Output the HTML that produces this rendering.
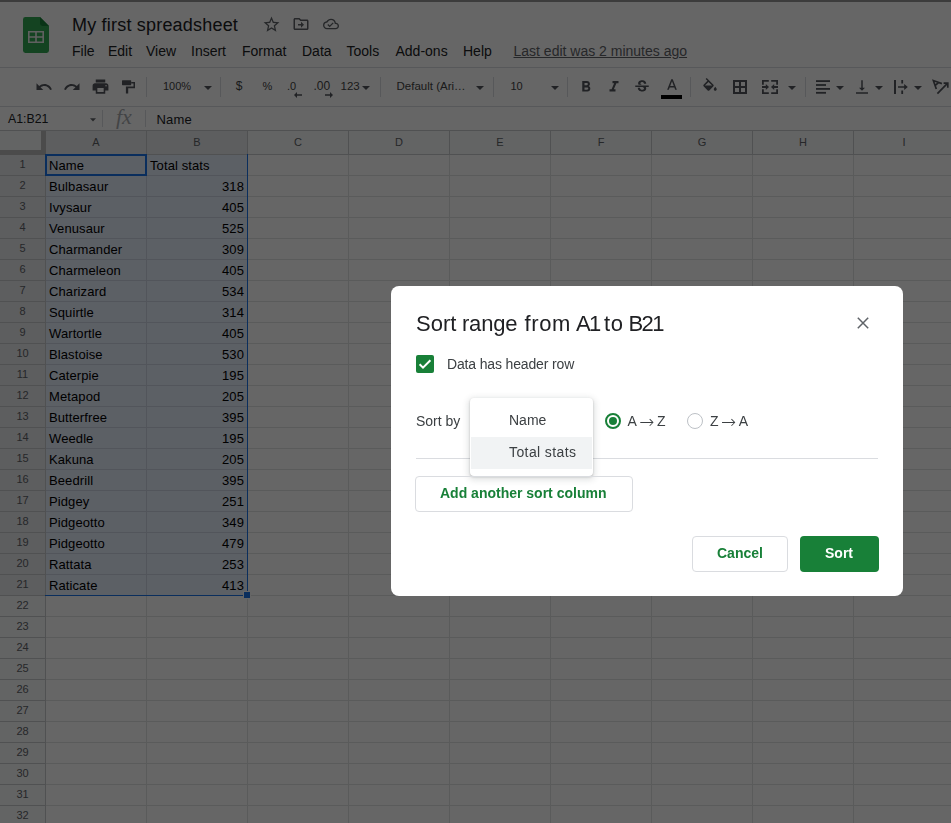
<!DOCTYPE html><html><head><meta charset="utf-8"><title>My first spreadsheet</title><style>
*{box-sizing:border-box;margin:0;padding:0}
html,body{width:951px;height:823px;overflow:hidden;background:#fff;font-family:"Liberation Sans",sans-serif;}
#app{position:absolute;left:0;top:0;width:951px;height:823px;overflow:hidden;background:#fff}
.abs{position:absolute}
#topline{left:0;top:0;width:951px;height:2px;background:#969696}
#title{left:72px;top:14px;letter-spacing:0.2px;font-size:18px;line-height:22px;color:#202124;white-space:nowrap}
.menu{top:42px;font-size:14px;line-height:18px;color:#202124;white-space:nowrap}
#lastedit{left:513.5px;top:42px;font-size:14px;line-height:18px;color:#5f6368;text-decoration:underline;white-space:nowrap}
#tbborder{left:0;top:67px;width:951px;height:1px;background:#dadce0}
#toolbar{left:0;top:68px;width:951px;height:38px;background:#fff}
.tbtxt{font-size:11px;line-height:14px;color:#444;white-space:nowrap}
.sep{width:1px;height:20px;top:77px;background:#dadce0}
#fbar-top{left:0;top:106px;width:951px;height:1px;background:#dadce0}
#fbar-bot{left:0;top:130px;width:951px;height:1px;background:#c9cbce}
#namebox{left:8px;top:112px;font-size:12.3px;line-height:15px;color:#202124}
#fval{left:156.5px;top:112px;letter-spacing:0.2px;font-size:13px;line-height:15px;color:#202124}
#colhdr{left:0;top:131px;width:951px;height:23px;background:#f8f9fa}
.ch{top:131px;height:23px;font-size:11px;line-height:23px;color:#5f6368;text-align:center;border-right:1px solid #c9cbce;}
.rh{left:0;width:46px;height:21px;font-size:11px;line-height:19px;color:#5f6368;text-align:center;background:#f8f9fa;border-bottom:1px solid #c9cbce;border-right:1px solid #c9cbce}
.hl{left:46px;width:905px;height:1px;background:#e2e3e4}
.vl{top:155px;width:1px;height:668px;background:#e2e3e4}
.cell{font-size:13px;line-height:15px;color:#000;white-space:nowrap;letter-spacing:0.1px}
#overlay{left:0;top:0;width:951px;height:823px;background:rgba(0,0,0,0.6)}

.dtxt{font-size:14px;line-height:18px;color:#3c4043;white-space:nowrap}
.arr{font-family:"DejaVu Sans",sans-serif;font-weight:200;font-size:18px;line-height:0;margin:0 2.5px;position:relative;top:2px}
.gbtn{font-size:14px;line-height:20px;font-weight:bold;white-space:nowrap}
#dialog{left:391px;top:286px;width:512px;height:310px;background:#fff;border-radius:8px;will-change:transform;}
</style></head><body><div id="app">
<div id="topline" class="abs"></div>
<svg class="abs" style="left:23px;top:17px" width="26" height="36" viewBox="0 0 26 36">
<path d="M2.4 0H17L26 9V33.6a2.4 2.4 0 0 1-2.4 2.4H2.4A2.4 2.4 0 0 1 0 33.600000000000001V2.4A2.4 2.4 0 0 1 2.4 0Z" fill="#34a853"/>
<path d="M17 0L26 9H19.4A2.4 2.4 0 0 1 17 6.6Z" fill="#188038"/>
<path d="M5 14v12h16V14H5zm7.200000000000001 10.4H6.6v-3.6h5.6v3.6zm0-5.2H6.6v-3.6h5.6v3.6zm7.2 5.2h-5.6v-3.6h5.6v3.6zm0-5.2h-5.6v-3.6h5.6v3.6z" fill="#f1f1f1"/>
</svg>
<div id="title" class="abs">My first spreadsheet</div>
<svg class="abs" style="left:261.5px;top:14.5px" width="19" height="19" viewBox="0 0 24 24"><path d="M22 9.24l-7.19-.62L12 2 9.19 8.63 2 9.24l5.46 4.73L5.82 21 12 17.27 18.18 21l-1.63-7.03L22 9.24zM12 15.4l-3.76 2.27 1-4.28-3.32-2.88 4.38-.38L12 6.1l1.71 4.04 4.38.38-3.32 2.88 1 4.28L12 15.4z" fill="#5f6368"/></svg>
<svg class="abs" style="left:291.5px;top:15px" width="18" height="18" viewBox="0 0 24 24"><path d="M20 6h-8l-2-2H4c-1.1 0-1.99.9-1.99 2L2 18c0 1.1.9 2 2 2h16c1.1 0 2-.9 2-2V8c0-1.1-.9-2-2-2zm0 12H4V6h5.17l2 2H20v10zm-8-1l4-4-4-4v3H8v2h4v3z" fill="#5f6368"/></svg>
<svg class="abs" style="left:323px;top:16.3px" width="16" height="16" viewBox="0 0 24 24"><path d="M19.35 10.04A7.49 7.49 0 0 0 12 4C9.11 4 6.6 5.64 5.35 8.04A5.994 5.994 0 0 0 0 14c0 3.31 2.69 6 6 6h13c2.76 0 5-2.24 5-5 0-2.64-2.05-4.78-4.65-4.96zM19 18H6c-2.21 0-4-1.79-4-4 0-2.05 1.53-3.76 3.56-3.97l1.07-.11.5-.95A5.469 5.469 0 0 1 12 6c2.62 0 4.88 1.86 5.39 4.43l.3 1.5 1.53.11A2.98 2.98 0 0 1 22 15c0 1.65-1.35 3-3 3zm-9-3.82l-2.09-2.09L6.5 13.5 10 17l6.01-6.01-1.41-1.41z" fill="#5f6368"/></svg>
<div class="abs menu" style="left:72px">File</div>
<div class="abs menu" style="left:108px">Edit</div>
<div class="abs menu" style="left:146px">View</div>
<div class="abs menu" style="left:191px">Insert</div>
<div class="abs menu" style="left:242px">Format</div>
<div class="abs menu" style="left:302px">Data</div>
<div class="abs menu" style="left:346.5px">Tools</div>
<div class="abs menu" style="left:395.5px">Add-ons</div>
<div class="abs menu" style="left:463px">Help</div>
<div id="lastedit" class="abs">Last edit was 2 minutes ago</div>
<div id="tbborder" class="abs"></div>
<div id="toolbar" class="abs"></div>
<svg class="abs" style="left:35.0px;top:78.0px" width="18" height="18" viewBox="0 0 24 24"><path d="M12.5 8c-2.65 0-5.05.99-6.9 2.6L2 7v9h9l-3.62-3.62c1.39-1.16 3.16-1.88 5.12-1.88 3.54 0 6.55 2.31 7.6 5.5l2.37-.78C21.08 11.03 17.15 8 12.5 8z" fill="#53565c"/></svg>
<svg class="abs" style="left:63.0px;top:78.0px" width="18" height="18" viewBox="0 0 24 24"><path d="M18.4 10.6C16.55 8.99 14.15 8 11.5 8c-4.65 0-8.58 3.03-9.96 7.22L3.9 16c1.05-3.19 4.05-5.5 7.6-5.5 1.95 0 3.73.72 5.12 1.88L13 16h9V7l-3.6 3.6z" fill="#53565c"/></svg>
<svg class="abs" style="left:90.5px;top:77.0px" width="19" height="19" viewBox="0 0 24 24"><path d="M19 8H5c-1.66 0-3 1.34-3 3v6h4v4h12v-4h4v-6c0-1.66-1.34-3-3-3zm-3 11H8v-5h8v5zm3-7c-.55 0-1-.45-1-1s.45-1 1-1 1 .45 1 1-.45 1-1 1zm-1-9H6v4h12V3z" fill="#53565c"/></svg>
<svg class="abs" style="left:122px;top:80px" width="14" height="14" viewBox="0 0 14 14"><g fill="#53565c"><path d="M0.6 0.2h8a.6.6 0 0 1 .6.6v3.8a.6.6 0 0 1-.6.6h-8a.6.6 0 0 1-.6-.6V.8a.6.6 0 0 1 .6-.6z"/><path d="M9.2 1.9h3.8v6.3H6.2v5.3H3.9V6.5h7.6V3.4H9.2z"/></g></svg>
<div class="abs sep" style="left:146px"></div>
<div class="abs tbtxt" id="t100" style="left:163px;top:79px;">100%</div>
<svg class="abs" style="left:204px;top:85.5px" width="8" height="4" viewBox="0 0 8 4"><path d="M0 0h8L4.0 4z" fill="#53565c"/></svg>
<div class="abs sep" style="left:220px"></div>
<div class="abs tbtxt" id="tdollar" style="left:235.7px;top:79px;font-size:12px;">$</div>
<div class="abs tbtxt" id="tpct" style="left:262.5px;top:79px;">%</div>
<div class="abs tbtxt" id="tdec0" style="left:287px;top:79px;">.0</div>
<svg class="abs" style="left:294px;top:92px" width="8" height="6" viewBox="0 0 8 6"><path d="M3 0L0 3l3 3V3.7h5V2.3H3z" fill="#53565c"/></svg>
<div class="abs tbtxt" id="tdec00" style="left:313.5px;top:79px;font-size:12px;">.00</div>
<svg class="abs" style="left:324.5px;top:92px" width="8" height="6" viewBox="0 0 8 6"><path d="M5 0l3 3-3 3V3.7H0V2.3h5z" fill="#53565c"/></svg>
<div class="abs tbtxt" id="t123" style="left:340.5px;top:79px;font-size:11.5px;">123</div>
<svg class="abs" style="left:362px;top:85.5px" width="8" height="4" viewBox="0 0 8 4"><path d="M0 0h8L4.0 4z" fill="#53565c"/></svg>
<div class="abs sep" style="left:380px"></div>
<div class="abs tbtxt" id="tfont" style="left:396.5px;top:79px;font-size:11.5px;">Default (Ari…</div>
<svg class="abs" style="left:476px;top:85.5px" width="8" height="4" viewBox="0 0 8 4"><path d="M0 0h8L4.0 4z" fill="#53565c"/></svg>
<div class="abs sep" style="left:493px"></div>
<div class="abs tbtxt" id="tsize" style="left:510.5px;top:79px;">10</div>
<svg class="abs" style="left:551px;top:85.5px" width="8" height="4" viewBox="0 0 8 4"><path d="M0 0h8L4.0 4z" fill="#53565c"/></svg>
<div class="abs sep" style="left:567px"></div>
<svg class="abs" style="left:576.5px;top:78.0px" width="18" height="18" viewBox="0 0 24 24"><path d="M15.6 10.79c.97-.67 1.65-1.77 1.65-2.79 0-2.26-1.75-4-4-4H7v14h7.04c2.09 0 3.71-1.7 3.71-3.79 0-1.52-.86-2.82-2.15-3.42zM10 6.5h3c.83 0 1.5.67 1.5 1.5s-.67 1.5-1.5 1.5h-3v-3zm3.5 9H10v-3h3.5c.83 0 1.5.67 1.5 1.5s-.67 1.5-1.5 1.5z" fill="#53565c"/></svg>
<svg class="abs" style="left:605.0px;top:78.0px" width="18" height="18" viewBox="0 0 24 24"><path d="M10 4v3h2.21l-3.42 8H6v3h8v-3h-2.21l3.42-8H18V4z" fill="#53565c"/></svg>
<svg class="abs" style="left:633.0px;top:78.0px" width="18" height="18" viewBox="0 0 24 24"><path d="M7.24 8.75c-.26-.48-.39-1.03-.39-1.67 0-.61.13-1.16.4-1.67.26-.5.63-.93 1.11-1.29.48-.35 1.05-.63 1.7-.83.66-.19 1.39-.29 2.18-.29.81 0 1.54.11 2.21.34.66.22 1.23.54 1.69.94.47.4.83.88 1.08 1.43.25.55.38 1.15.38 1.81h-3.01c0-.31-.05-.59-.15-.85-.09-.27-.24-.49-.44-.68-.2-.19-.45-.33-.75-.44-.3-.1-.66-.16-1.06-.16-.39 0-.74.04-1.03.13-.29.09-.53.21-.72.36-.19.16-.34.34-.44.55-.1.21-.15.43-.15.66 0 .48.25.88.74 1.21.38.25.77.48 1.41.7H7.39c-.05-.08-.11-.17-.15-.25zM21 12v-2H3v2h9.62c.18.07.4.14.55.2.37.17.66.34.87.51.21.17.35.36.43.57.07.2.11.43.11.69 0 .23-.05.45-.14.66-.09.2-.23.38-.42.53-.19.15-.42.26-.71.35-.29.08-.63.13-1.01.13-.43 0-.83-.04-1.18-.13s-.66-.23-.91-.42c-.25-.19-.45-.44-.59-.75-.14-.31-.25-.76-.25-1.21H6.4c0 .55.08 1.13.24 1.58.16.45.37.85.65 1.21.28.35.6.66.98.92.37.26.78.48 1.22.65.44.17.9.3 1.38.39.48.08.96.13 1.44.13.8 0 1.53-.09 2.18-.28s1.21-.45 1.67-.79c.46-.34.82-.77 1.07-1.27s.38-1.07.38-1.71c0-.6-.1-1.14-.31-1.61-.05-.11-.11-.23-.17-.33H21z" fill="#53565c"/></svg>
<svg class="abs" style="left:662.5px;top:77.0px" width="18" height="18" viewBox="0 0 24 24"><path d="M11 3L5.5 17h2.25l1.12-3h6.25l1.12 3h2.25L13 3h-2zm-1.38 9L12 5.67 14.38 12H9.62z" fill="#53565c"/></svg>
<div class="abs" style="left:661px;top:95px;width:21px;height:4px;background:#000"></div>
<div class="abs sep" style="left:690px"></div>
<svg class="abs" style="left:701.0px;top:78.0px" width="18" height="18" viewBox="0 0 24 24"><path d="M16.56 8.94L7.62 0 6.21 1.41l2.38 2.38-5.15 5.15c-.59.59-.59 1.54 0 2.12l5.5 5.5c.29.29.68.44 1.06.44s.77-.15 1.06-.44l5.5-5.5c.59-.58.59-1.53 0-2.12zM5.21 10L10 5.21 14.79 10H5.21zM19 11.5s-2 2.17-2 3.5c0 1.1.9 2 2 2s2-.9 2-2c0-1.33-2-3.5-2-3.5z" fill="#53565c"/></svg>
<svg class="abs" style="left:733px;top:80px" width="14" height="14" viewBox="0 0 14 14"><path d="M0 0v14h14V0H0zm6 12H2V8h4v4zm0-6H2V2h4v4zm6 6H8V8h4v4zm0-6H8V2h4v4z" fill="#53565c"/></svg>
<svg class="abs" style="left:762px;top:80px" width="16" height="14" viewBox="0 0 16 14"><g fill="#53565c">
<path d="M0 0h6.8v1.8H1.8v2.9H0zM9.2 0H16v4.7h-1.8V1.8H9.2zM0 9.3h1.8v2.9h5V14H0zM14.2 9.3H16V14H9.2v-1.8h5z"/>
<path d="M0 6.1h3.8V4L7 7l-3.2 3V7.9H0zM16 6.1h-3.8V4L9 7l3.2 3V7.900000000000001H16z"/></g></svg>
<svg class="abs" style="left:788px;top:85.5px" width="8" height="4" viewBox="0 0 8 4"><path d="M0 0h8L4.0 4z" fill="#53565c"/></svg>
<div class="abs sep" style="left:805px"></div>
<svg class="abs" style="left:816px;top:80px" width="14" height="14" viewBox="0 0 14 14"><g fill="#53565c"><rect x="0" y="0.2" width="14" height="1.8"/><rect x="0" y="4.1" width="10" height="1.8"/><rect x="0" y="8" width="14" height="1.8"/><rect x="0" y="11.9" width="10" height="1.8"/></g></svg>
<svg class="abs" style="left:836px;top:85.5px" width="8" height="4" viewBox="0 0 8 4"><path d="M0 0h8L4.0 4z" fill="#53565c"/></svg>
<svg class="abs" style="left:853.0px;top:78.0px" width="18" height="18" viewBox="0 0 24 24"><path d="M16 13h-3V3h-2v10H8l4 4 4-4zM4 19v2h16v-2H4z" fill="#53565c"/></svg>
<svg class="abs" style="left:875px;top:85.5px" width="8" height="4" viewBox="0 0 8 4"><path d="M0 0h8L4.0 4z" fill="#53565c"/></svg>
<svg class="abs" style="left:894px;top:80px" width="14" height="14" viewBox="0 0 14 14"><g fill="#53565c">
<rect x="0" y="0" width="2" height="14"/><rect x="7.3" y="0" width="1.8" height="3.5"/><rect x="7.3" y="10.5" width="1.8" height="3.5"/>
<path d="M4 6.2h6.2V4l3.6 3-3.6 3V7.8H4z"/></g></svg>
<svg class="abs" style="left:914px;top:85.5px" width="8" height="4" viewBox="0 0 8 4"><path d="M0 0h8L4.0 4z" fill="#53565c"/></svg>
<svg class="abs" style="left:932px;top:79px" width="19" height="16" viewBox="0 0 19 16"><g fill="none" stroke="#53565c" stroke-width="1.7">
<path d="M5.4 14.6L15.2 4.6"/><path d="M11.6 4.2h4.2V8.8"/><path d="M4.3 10L1.3 1.5l8.6 3.1M3 6.500000000000001l3.6-2.9"/></g></svg>
<div id="fbar-top" class="abs"></div><div id="fbar-bot" class="abs"></div>
<div id="namebox" class="abs">A1:B21</div>
<svg class="abs" style="left:90px;top:118px" width="6" height="4" viewBox="0 0 6 4"><path d="M0 0.3h6L3 3.5z" fill="#5f6368"/></svg>
<div class="abs" style="left:102px;top:110px;width:1px;height:17px;background:#dadce0"></div>
<div class="abs" style="left:116px;top:105px;font-family:'Liberation Serif',serif;font-style:italic;font-size:22px;line-height:24px;color:#a8abae">fx</div>
<div class="abs" style="left:145px;top:110px;width:1px;height:17px;background:#dadce0"></div>
<div id="fval" class="abs">Name</div>
<div id="colhdr" class="abs"></div>
<div class="abs" style="left:0;top:131px;width:46px;height:24px;background:#bcbcbc"></div>
<div class="abs" style="left:0;top:131px;width:41px;height:19px;background:#f8f9fa"></div>
<div class="abs ch" style="left:46px;width:101px;background:#e8eaed;">A</div>
<div class="abs ch" style="left:147px;width:101px;background:#e8eaed;">B</div>
<div class="abs ch" style="left:248px;width:101px;">C</div>
<div class="abs ch" style="left:349px;width:101px;">D</div>
<div class="abs ch" style="left:450px;width:101px;">E</div>
<div class="abs ch" style="left:551px;width:101px;">F</div>
<div class="abs ch" style="left:652px;width:101px;">G</div>
<div class="abs ch" style="left:753px;width:101px;">H</div>
<div class="abs ch" style="left:854px;width:101px;">I</div>
<div class="abs" style="left:46px;top:154px;width:905px;height:1px;background:#c9cbce"></div>
<div class="abs rh" style="top:155px;background:#e8eaed;">1</div>
<div class="abs rh" style="top:176px;background:#e8eaed;">2</div>
<div class="abs rh" style="top:197px;background:#e8eaed;">3</div>
<div class="abs rh" style="top:218px;background:#e8eaed;">4</div>
<div class="abs rh" style="top:239px;background:#e8eaed;">5</div>
<div class="abs rh" style="top:260px;background:#e8eaed;">6</div>
<div class="abs rh" style="top:281px;background:#e8eaed;">7</div>
<div class="abs rh" style="top:302px;background:#e8eaed;">8</div>
<div class="abs rh" style="top:323px;background:#e8eaed;">9</div>
<div class="abs rh" style="top:344px;background:#e8eaed;">10</div>
<div class="abs rh" style="top:365px;background:#e8eaed;">11</div>
<div class="abs rh" style="top:386px;background:#e8eaed;">12</div>
<div class="abs rh" style="top:407px;background:#e8eaed;">13</div>
<div class="abs rh" style="top:428px;background:#e8eaed;">14</div>
<div class="abs rh" style="top:449px;background:#e8eaed;">15</div>
<div class="abs rh" style="top:470px;background:#e8eaed;">16</div>
<div class="abs rh" style="top:491px;background:#e8eaed;">17</div>
<div class="abs rh" style="top:512px;background:#e8eaed;">18</div>
<div class="abs rh" style="top:533px;background:#e8eaed;">19</div>
<div class="abs rh" style="top:554px;background:#e8eaed;">20</div>
<div class="abs rh" style="top:575px;background:#e8eaed;">21</div>
<div class="abs rh" style="top:596px;">22</div>
<div class="abs rh" style="top:617px;">23</div>
<div class="abs rh" style="top:638px;">24</div>
<div class="abs rh" style="top:659px;">25</div>
<div class="abs rh" style="top:680px;">26</div>
<div class="abs rh" style="top:701px;">27</div>
<div class="abs rh" style="top:722px;">28</div>
<div class="abs rh" style="top:743px;">29</div>
<div class="abs rh" style="top:764px;">30</div>
<div class="abs rh" style="top:785px;">31</div>
<div class="abs rh" style="top:806px;">32</div>
<div class="abs hl" style="top:175px"></div>
<div class="abs hl" style="top:196px"></div>
<div class="abs hl" style="top:217px"></div>
<div class="abs hl" style="top:238px"></div>
<div class="abs hl" style="top:259px"></div>
<div class="abs hl" style="top:280px"></div>
<div class="abs hl" style="top:301px"></div>
<div class="abs hl" style="top:322px"></div>
<div class="abs hl" style="top:343px"></div>
<div class="abs hl" style="top:364px"></div>
<div class="abs hl" style="top:385px"></div>
<div class="abs hl" style="top:406px"></div>
<div class="abs hl" style="top:427px"></div>
<div class="abs hl" style="top:448px"></div>
<div class="abs hl" style="top:469px"></div>
<div class="abs hl" style="top:490px"></div>
<div class="abs hl" style="top:511px"></div>
<div class="abs hl" style="top:532px"></div>
<div class="abs hl" style="top:553px"></div>
<div class="abs hl" style="top:574px"></div>
<div class="abs hl" style="top:595px"></div>
<div class="abs hl" style="top:616px"></div>
<div class="abs hl" style="top:637px"></div>
<div class="abs hl" style="top:658px"></div>
<div class="abs hl" style="top:679px"></div>
<div class="abs hl" style="top:700px"></div>
<div class="abs hl" style="top:721px"></div>
<div class="abs hl" style="top:742px"></div>
<div class="abs hl" style="top:763px"></div>
<div class="abs hl" style="top:784px"></div>
<div class="abs hl" style="top:805px"></div>
<div class="abs hl" style="top:826px"></div>
<div class="abs vl" style="left:146px"></div>
<div class="abs vl" style="left:247px"></div>
<div class="abs vl" style="left:348px"></div>
<div class="abs vl" style="left:449px"></div>
<div class="abs vl" style="left:550px"></div>
<div class="abs vl" style="left:651px"></div>
<div class="abs vl" style="left:752px"></div>
<div class="abs vl" style="left:853px"></div>
<div class="abs vl" style="left:954px"></div>
<div class="abs" style="left:46px;top:155px;width:201px;height:441px;background:rgba(14,101,235,0.1)"></div>
<div class="abs" style="left:45px;top:154px;width:203px;height:442px;border:1px solid #1a73e8;border-left:none;border-top:none"></div>
<div class="abs" style="left:45px;top:154px;width:102px;height:22px;border:2px solid #1a73e8;"></div>
<div class="abs" style="left:46px;top:155px;width:100px;height:20px;background:rgba(14,101,235,0.0)"></div>
<div class="abs" style="left:243px;top:591px;width:8px;height:8px;background:#1a73e8;border:1px solid #fff"></div>
<div class="abs cell" style="left:49px;top:158px">Name</div>
<div class="abs cell" style="left:150px;top:158px">Total stats</div>
<div class="abs cell" style="left:49px;top:179px">Bulbasaur</div>
<div class="abs cell" style="left:147px;width:97px;text-align:right;top:179px">318</div>
<div class="abs cell" style="left:49px;top:200px">Ivysaur</div>
<div class="abs cell" style="left:147px;width:97px;text-align:right;top:200px">405</div>
<div class="abs cell" style="left:49px;top:221px">Venusaur</div>
<div class="abs cell" style="left:147px;width:97px;text-align:right;top:221px">525</div>
<div class="abs cell" style="left:49px;top:242px">Charmander</div>
<div class="abs cell" style="left:147px;width:97px;text-align:right;top:242px">309</div>
<div class="abs cell" style="left:49px;top:263px">Charmeleon</div>
<div class="abs cell" style="left:147px;width:97px;text-align:right;top:263px">405</div>
<div class="abs cell" style="left:49px;top:284px">Charizard</div>
<div class="abs cell" style="left:147px;width:97px;text-align:right;top:284px">534</div>
<div class="abs cell" style="left:49px;top:305px">Squirtle</div>
<div class="abs cell" style="left:147px;width:97px;text-align:right;top:305px">314</div>
<div class="abs cell" style="left:49px;top:326px">Wartortle</div>
<div class="abs cell" style="left:147px;width:97px;text-align:right;top:326px">405</div>
<div class="abs cell" style="left:49px;top:347px">Blastoise</div>
<div class="abs cell" style="left:147px;width:97px;text-align:right;top:347px">530</div>
<div class="abs cell" style="left:49px;top:368px">Caterpie</div>
<div class="abs cell" style="left:147px;width:97px;text-align:right;top:368px">195</div>
<div class="abs cell" style="left:49px;top:389px">Metapod</div>
<div class="abs cell" style="left:147px;width:97px;text-align:right;top:389px">205</div>
<div class="abs cell" style="left:49px;top:410px">Butterfree</div>
<div class="abs cell" style="left:147px;width:97px;text-align:right;top:410px">395</div>
<div class="abs cell" style="left:49px;top:431px">Weedle</div>
<div class="abs cell" style="left:147px;width:97px;text-align:right;top:431px">195</div>
<div class="abs cell" style="left:49px;top:452px">Kakuna</div>
<div class="abs cell" style="left:147px;width:97px;text-align:right;top:452px">205</div>
<div class="abs cell" style="left:49px;top:473px">Beedrill</div>
<div class="abs cell" style="left:147px;width:97px;text-align:right;top:473px">395</div>
<div class="abs cell" style="left:49px;top:494px">Pidgey</div>
<div class="abs cell" style="left:147px;width:97px;text-align:right;top:494px">251</div>
<div class="abs cell" style="left:49px;top:515px">Pidgeotto</div>
<div class="abs cell" style="left:147px;width:97px;text-align:right;top:515px">349</div>
<div class="abs cell" style="left:49px;top:536px">Pidgeotto</div>
<div class="abs cell" style="left:147px;width:97px;text-align:right;top:536px">479</div>
<div class="abs cell" style="left:49px;top:557px">Rattata</div>
<div class="abs cell" style="left:147px;width:97px;text-align:right;top:557px">253</div>
<div class="abs cell" style="left:49px;top:578px">Raticate</div>
<div class="abs cell" style="left:147px;width:97px;text-align:right;top:578px">413</div>
<div id="overlay" class="abs"></div>
<div id="dialog" class="abs"><div class="abs" id="dtitle" style="left:0;top:24px;width:460px;height:28px;font-size:22px;line-height:28px;color:#202124;white-space:nowrap"><span class="abs" style="left:25px;top:0;letter-spacing:0px">Sort</span> <span class="abs" style="left:70.9px;top:0;letter-spacing:-0.15px">range</span> <span class="abs" style="left:133.6px;top:0;letter-spacing:0.6px">from</span> <span class="abs" style="left:185.1px;top:0;letter-spacing:-1.7px">A1</span> <span class="abs" style="left:213.1px;top:0;letter-spacing:0.5px">to</span> <span class="abs" style="left:237.4px;top:0;letter-spacing:-1.5px">B21</span></div>
<svg class="abs" style="left:466px;top:31px" width="12" height="12" viewBox="0 0 12 12"><path d="M0.8 0.8L11.2 11.2M11.2 0.8L0.8 11.2" stroke="#5f6368" stroke-width="1.5" fill="none"/></svg>
<div class="abs" style="left:25px;top:69px;width:18px;height:18px;background:#188038;border-radius:2px"></div>
<svg class="abs" style="left:25px;top:69px" width="18" height="18" viewBox="0 0 18 18"><path d="M3.6 9.3L7 12.7L14.4 5.3" stroke="#fff" stroke-width="2" fill="none"/></svg>
<div class="abs dtxt" id="dhdr" style="left:56px;top:69px;letter-spacing:-0.15px">Data has header row</div>
<div class="abs dtxt" id="dsortby" style="left:25px;top:126px">Sort by</div>
<div class="abs" style="left:25px;top:172px;width:462px;height:1px;background:#dadce0"></div>
<div class="abs" id="popup" style="left:79px;top:112px;width:123px;height:78px;background:#fff;border-radius:4px;box-shadow:0 2px 6px 2px rgba(60,64,67,0.15),0 1px 2px rgba(60,64,67,0.3)">
<div class="abs dtxt" id="pi1" style="left:39px;top:13px">Name</div>
<div class="abs" style="left:1px;top:39px;width:121px;height:32px;background:#f1f3f4"></div>
<div class="abs dtxt" id="pi2" style="left:39px;top:45px;letter-spacing:0.4px">Total stats</div>
</div>
<div class="abs" style="left:214px;top:127px;width:16px;height:16px;border:2px solid #188038;border-radius:50%"></div>
<div class="abs" style="left:218px;top:131px;width:8px;height:8px;background:#188038;border-radius:50%"></div>
<div class="abs dtxt" id="daz" style="left:236.5px;top:126px">A<span class="arr">→</span>Z</div>
<div class="abs" style="left:296px;top:127px;width:16px;height:16px;border:1px solid #bdc1c6;border-radius:50%"></div>
<div class="abs dtxt" id="dza" style="left:319px;top:126px">Z<span class="arr">→</span>A</div>
<div class="abs" style="left:24px;top:190px;width:218px;height:36px;border:1px solid #dadce0;border-radius:4px"></div>
<div class="abs gbtn" id="dadd" style="left:49px;top:197px;color:#188038">Add another sort column</div>
<div class="abs" style="left:301px;top:250px;width:96px;height:36px;border:1px solid #dadce0;border-radius:4px"></div>
<div class="abs gbtn" id="dcancel" style="left:326px;top:257px;color:#188038">Cancel</div>
<div class="abs" style="left:409px;top:250px;width:79px;height:36px;background:#188038;border-radius:4px"></div>
<div class="abs gbtn" id="dsort" style="left:434px;top:257px;color:#fff">Sort</div>
</div>
</div></body></html>
